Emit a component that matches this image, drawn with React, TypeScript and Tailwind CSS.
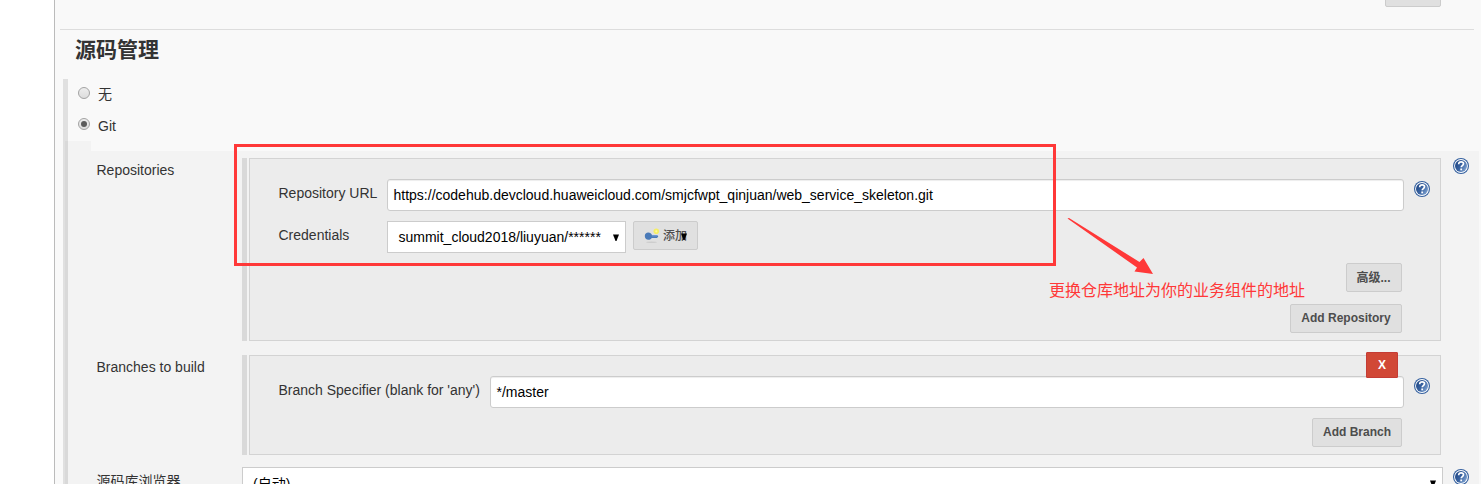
import React from 'react';

const Help = ({ className = '' }: { className?: string }) => (
  <svg className={`h-4 w-4 shrink-0 ${className}`} viewBox="0 0 16 16">
    <defs>
      <linearGradient id="helpFill" x1="0" y1="0.2" x2="1" y2="0.8">
        <stop offset="0" stopColor="#1f4684" />
        <stop offset="0.5" stopColor="#3a64a2" />
        <stop offset="1" stopColor="#86a8d4" />
      </linearGradient>
    </defs>
    <circle cx="8" cy="8" r="8" fill="#34609f" />
    <circle cx="8" cy="8" r="6.9" fill="#ffffff" />
    <circle cx="8" cy="8" r="6" fill="url(#helpFill)" />
    <path d="M5.700 6.200C5.700 4.600 6.700 3.800 8.100 3.800c1.400 0 2.400.8 2.400 2 0 1.700-2.300 1.800-2.300 3.500" fill="none" stroke="#fff" strokeWidth="1.700" />
    <rect x="7.300" y="10.500" width="1.800" height="1.800" fill="#fff" />
  </svg>
);

const Radio = ({ checked = false }: { checked?: boolean }) => (
  <svg className="h-3 w-3 shrink-0" viewBox="0 0 12 12">
    <defs>
      <linearGradient id="radioFill" x1="0" y1="0" x2="0" y2="1">
        <stop offset="0" stopColor="#eeeeee" />
        <stop offset="1" stopColor="#dcdcdc" />
      </linearGradient>
    </defs>
    <circle cx="6" cy="6" r="5.5" fill="url(#radioFill)" stroke="#a3a3a3" />
    {checked && <circle cx="6" cy="6" r="3" fill="#5c5c5c" />}
  </svg>
);

const Caret = ({ className = '' }: { className?: string }) => (
  <svg className={`h-[7px] w-[6px] shrink-0 ${className}`} viewBox="0 0 6 7">
    <path d="M0 0.500h6L3.500 7h-1z" fill="#000" />
  </svg>
);

const KeyIcon = () => (
  <svg className="h-4 w-4 shrink-0" viewBox="0 0 16 16">
    <ellipse cx="7.5" cy="14.300" rx="5.5" ry="0.8" fill="#cdcdcd" />
    <path d="M4.300 4.500C2.200 4.500.8 6 .8 8s1.500 3.800 3.600 3.800c1.600 0 2.700-.8 3.300-1.900h5.300l1.300-1.500-1.200-1.500H8C7.300 5.500 6.200 4.500 4.300 4.500z" fill="#4a7ab8" />
    <path d="M7.800 7.800h5.200" fill="none" stroke="#7fa9db" strokeWidth="0.900" />
    <circle cx="12.300" cy="3.300" r="2.800" fill="#f5ee66" />
    <circle cx="12.300" cy="3.300" r="1.100" fill="#fffa9c" />
  </svg>
);

const Button = ({ children, className = 'pb-[2px]' }: { children?: React.ReactNode; className?: string }) => (
  <button className={`flex h-[29px] shrink-0 items-center justify-center rounded-[2px] border border-[#cccccc] bg-[#e0e0e0] text-[12px] font-bold whitespace-nowrap text-[#4d4d4d] ${className}`}>
    {children}
  </button>
);

const Field = ({ children, className = '' }: { children: React.ReactNode; className?: string }) => (
  <div className={`flex h-8 shrink-0 items-center rounded-[3px] border border-[#cccccc] bg-white px-[5.5px] text-[14px] whitespace-nowrap text-black shadow-[inset_0_1px_1px_rgba(0,0,0,0.075)] ${className}`}>
    {children}
  </div>
);

const Block = ({ label, children, help, className = '' }: { label: string; children: React.ReactNode; help?: boolean; className?: string }) => (
  <div className={`flex ${className}`}>
    <div className="w-[174px] shrink-0 pt-[2px] pl-[28.5px] leading-5">{label}</div>
    <div className="mr-[2px] w-[5px] shrink-0 bg-[#d9d9d9]" />
    <div className="w-[1192px] shrink-0 border border-[#d3d3d3] bg-[#ececec]">{children}</div>
    {help && <Help className="ml-3" />}
  </div>
);

export default function App() {
  return (
    <div className="relative flex h-[484px] w-[1481px] overflow-hidden bg-white pl-[54px] font-['Liberation_Sans','Noto_Sans_CJK_SC',sans-serif] text-[14px] text-[#333333]">
      <main className="w-[1427px] shrink-0 border-l border-[#bbbbbb] bg-[#f9f9f9]">
        <div className="flex h-[29px] items-start pl-[1330px]">
          <Button className="-mt-[22px] w-14" />
        </div>
        <div className="ml-[5px] h-px w-[1414px] bg-[#dddddd]" />
        <h1 className="h-[49px] pt-[5px] pl-5 text-[21px] leading-[30px] font-bold">源码管理</h1>

        <section className="ml-2 flex h-[480px]">
          <div className="flex w-[5px] shrink-0 flex-col bg-[#e0e0e0]">
            <div className="mt-[62px] ml-[2px] grow bg-[#d9d9d9]" />
          </div>
          <div className="w-[1411px] shrink-0">
            <div className="h-[62px] pl-[10px]">
              <label className="flex h-[31px] gap-2 pt-2">
                <Radio />
                <span className="-mt-px leading-4">无</span>
              </label>
              <label className="flex h-[31px] gap-2 pt-2">
                <Radio checked />
                <span className="leading-4">Git</span>
              </label>
            </div>
            <div className="h-[10px] w-[23px] bg-[#f3f3f3]" />

            <div className="flex flex-col bg-[#f3f3f3] pt-[7px]">
              <Block label="Repositories" help className="h-[183px]">
                <div className="flex pt-5">
                  <span className="w-[137px] shrink-0 pt-1 pl-[28.5px] leading-5">Repository URL</span>
                  <Field className="w-[1017px]">https://codehub.devcloud.huaweicloud.com/smjcfwpt_qinjuan/web_service_skeleton.git</Field>
                  <Help className="mt-[2px] ml-[10px]" />
                </div>
                <div className="flex pt-[10px]">
                  <span className="w-[137px] shrink-0 pt-1 pl-[28.5px] leading-5">Credentials</span>
                  <div className="flex h-8 w-[239px] items-center justify-between border border-[#cccccc] bg-white pr-[6px] pl-[10.5px] text-black">
                    <span>summit_cloud2018/liuyuan/******</span>
                    <Caret />
                  </div>
                  <Button className="ml-[7px] w-[65px]">
                    <KeyIcon />
                    <span className="ml-[3px] font-medium">添加</span>
                    <Caret className="mt-px -ml-[6px]" />
                  </Button>
                </div>
                <div className="flex flex-col items-end gap-3 pt-[10px] pr-[38px]">
                  <Button className="w-14 pr-px">高级...</Button>
                  <Button className="w-28 pb-[2px]">Add Repository</Button>
                </div>
              </Block>

              <Block label="Branches to build" className="mt-[14px] h-[100px]">
                <div className="relative flex pt-5">
                  <span className="w-[240px] shrink-0 pt-1 pl-[28.5px] leading-5">Branch Specifier (blank for 'any')</span>
                  <Field className="w-[914px]">*/master</Field>
                  <Help className="mt-[2px] ml-[10px]" />
                  <button className="absolute -top-1 right-[42px] flex h-[26px] w-8 items-center justify-center rounded-[1px] border border-[#c43c35] bg-[#d14836] text-[12px] font-bold text-white">X</button>
                </div>
                <div className="flex justify-end pt-[10px] pr-[38px]">
                  <Button className="w-[90px] pb-[2px]">Add Branch</Button>
                </div>
              </Block>

              <div className="flex pt-3">
                <span className="w-[174px] shrink-0 pt-1 pl-[28.5px] leading-5">源码库浏览器</span>
                <div className="flex h-8 w-[1201px] shrink-0 items-center justify-between border border-[#cccccc] bg-white pr-[6px] pl-[10px] text-black">
                  <span className="pt-[2px]">(自动)</span>
                  <Caret />
                </div>
                <Help className="mt-[2px] ml-[10px]" />
              </div>
            </div>
          </div>
        </section>
      </main>

      <div className="absolute top-[144px] left-[234px] h-[122px] w-[822px] border-[3px] border-[#ff3838]" />
      <svg className="absolute top-[216px] left-[1066px] h-[60px] w-[90px]" viewBox="0 0 90 60">
        <path d="M1.500 2.500 L3 2 L73.500 46 L77.500 42 L87 58 L68.500 55.500 L71 51.500 Z" fill="#ff3838" />
      </svg>
      <div className="absolute top-[279px] left-[1049px] text-[16px] leading-6 font-normal whitespace-nowrap text-[#ff3838]">更换仓库地址为你的业务组件的地址</div>
    </div>
  );
}
